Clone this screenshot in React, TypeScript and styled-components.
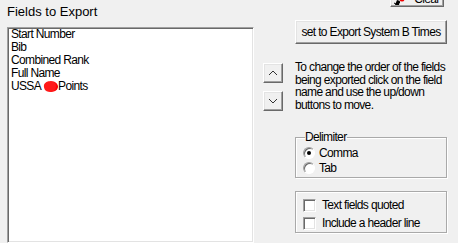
import React from "react";
import styled, { createGlobalStyle } from "styled-components";

const GlobalStyle = createGlobalStyle`
  *, *::before, *::after { box-sizing: border-box; }
  html, body { margin: 0; padding: 0; background: #f0f0f0; }
  body {
    font-family: "Liberation Sans", Arial, sans-serif;
    font-size: 12px;
    letter-spacing: -0.65px;
    color: #000;
  }
`;

const Window = styled.div`
  display: flex;
  width: 458px;
  height: 243px;
  overflow: hidden;
  background: #f0f0f0;
`;

const LeftPane = styled.div`
  display: flex;
  flex-direction: column;
  flex-shrink: 0;
  width: 254px;
  padding-left: 7px;
`;

const Title = styled.div`
  font-size: 13px;
  letter-spacing: 0;
  line-height: 16px;
  margin-top: 4px;
  height: 25px;
`;

const FieldList = styled.ul`
  list-style: none;
  margin: 0;
  padding: 0 3px;
  height: 230px;
  background: #fff;
  border: 1px solid;
  border-color: #a0a0a0 #fff #fff #a0a0a0;
  box-shadow: inset 1px 1px #696969, inset -1px -1px #e3e3e3;
`;

const FieldItem = styled.li`
  line-height: 13px;
  white-space: nowrap;
`;

const Redacted = styled.span`
  display: inline-block;
  width: 14px;
  height: 11px;
  margin: 0 0 0 1px;
  vertical-align: -2px;
  background: radial-gradient(circle at 40% 45%, #ff1a1a 55%, #f00 70%);
  border-radius: 40% 60% 45% 50%;
  transform: rotate(-10deg);
`;

const RightPane = styled.div`
  display: grid;
  grid-template-columns: 32px 152px;
  align-content: start;
  align-items: start;
  padding-left: 9px;
`;

const Button = styled.button`
  display: flex;
  align-items: center;
  justify-content: center;
  margin: 0;
  padding: 0;
  font: inherit;
  letter-spacing: inherit;
  color: #000;
  background: #f0f0f0;
  border: 1px solid;
  border-color: #fff #696969 #696969 #fff;
  box-shadow: inset -1px -1px #a0a0a0, inset 1px 1px #e3e3e3;
`;

const ClearButton = styled(Button)`
  grid-column: 1 / -1;
  justify-self: end;
  align-items: flex-end;
  gap: 9px;
  width: 54px;
  height: 24px;
  margin: -17px 3px 0 0;
  line-height: 13px;
`;

const ExportButton = styled(Button)`
  grid-column: 2;
  height: 24px;
  margin-top: 13px;
`;

const MoveButtons = styled.div`
  grid-column: 1;
  display: flex;
  flex-direction: column;
  gap: 8px;
  margin-top: 19px;
`;

const ArrowButton = styled(Button)`
  width: 20px;
  height: 20px;
`;

const HelpText = styled.p`
  grid-column: 2;
  width: 160px;
  margin: 17px 0 0;
  line-height: 12.6px;
`;

const GroupBox = styled.fieldset<{ $top: number }>`
  grid-column: 2;
  margin: ${({ $top }) => $top}px 0 0;
  padding: 1px 0 2px 7px;
  min-width: 0;
  border: 1px solid #a9a9a9;
  box-shadow: inset 1px 1px #fff, 1px 1px #fff;
`;

const Legend = styled.legend`
  padding: 0;
  margin-left: 2px;
  line-height: 13px;
`;

const OptionRow = styled.label<{ $height: number; $gap: number }>`
  display: flex;
  align-items: center;
  gap: ${({ $gap }) => $gap}px;
  height: ${({ $height }) => $height}px;
`;

const RadioDot = styled.span<{ $checked?: boolean }>`
  position: relative;
  width: 12px;
  height: 12px;
  border-radius: 50%;
  background: #fff;
  border: 1px solid;
  border-color: #a0a0a0 #fff #fff #a0a0a0;
  box-shadow: inset 1px 1px #696969;
  &::after {
    content: "";
    display: ${({ $checked }) => ($checked ? "block" : "none")};
    position: absolute;
    left: 3px;
    top: 3px;
    width: 4px;
    height: 4px;
    border-radius: 50%;
    background: #000;
  }
`;

const CheckSquare = styled.span`
  width: 13px;
  height: 13px;
  background: #fff;
  border: 1px solid;
  border-color: #a0a0a0 #fff #fff #a0a0a0;
  box-shadow: inset 1px 1px #696969, inset -1px -1px #e3e3e3;
`;

const ChecksBox = styled(GroupBox)`
  padding: 4px 0 0 7px;
`;

const fields = ["Start Number", "Bib", "Combined Rank", "Full Name"];

const Chevron: React.FC<{ up?: boolean }> = ({ up }) => (
  <svg width="10" height="6" viewBox="0 0 10 6">
    <polyline
      points={up ? "1,5 5,1 9,5" : "1,1 5,5 9,1"}
      fill="none"
      stroke="#333"
      strokeWidth="1"
    />
  </svg>
);

const ClearIcon = () => (
  <svg width="11" height="10" viewBox="0 0 11 10">
    <path d="M1 9 L3 4 L6 5 L5 9 Z" fill="#000" />
    <path d="M0 7 L2 8 M3 9 L6 6" stroke="#000" strokeWidth="1" />
    <circle cx="8" cy="3" r="2.5" fill="#e00" />
  </svg>
);

const App = () => {
  return (
    <Window>
      <GlobalStyle />
      <LeftPane>
        <Title>Fields to Export</Title>
        <FieldList>
          {fields.map((f) => (
            <FieldItem key={f}>{f}</FieldItem>
          ))}
          <FieldItem>
            USSA <Redacted />Points
          </FieldItem>
        </FieldList>
      </LeftPane>
      <RightPane>
        <ClearButton>
          <ClearIcon />
          <span>Clear</span>
        </ClearButton>
        <ExportButton>set to Export System B Times</ExportButton>
        <MoveButtons>
          <ArrowButton>
            <Chevron up />
          </ArrowButton>
          <ArrowButton>
            <Chevron />
          </ArrowButton>
        </MoveButtons>
        <HelpText>
          To change the order of the fields being exported click on the field
          name and use the up/down buttons to move.
        </HelpText>
        <GroupBox $top={20}>
          <Legend>Delimiter</Legend>
          <OptionRow $height={15} $gap={4}>
            <RadioDot $checked />
            Comma
          </OptionRow>
          <OptionRow $height={15} $gap={4}>
            <RadioDot />
            Tab
          </OptionRow>
        </GroupBox>
        <ChecksBox $top={13}>
          <OptionRow $height={18} $gap={6}>
            <CheckSquare />
            Text fields quoted
          </OptionRow>
          <OptionRow $height={18} $gap={6}>
            <CheckSquare />
            Include a header line
          </OptionRow>
        </ChecksBox>
      </RightPane>
    </Window>
  );
};

export default App;
